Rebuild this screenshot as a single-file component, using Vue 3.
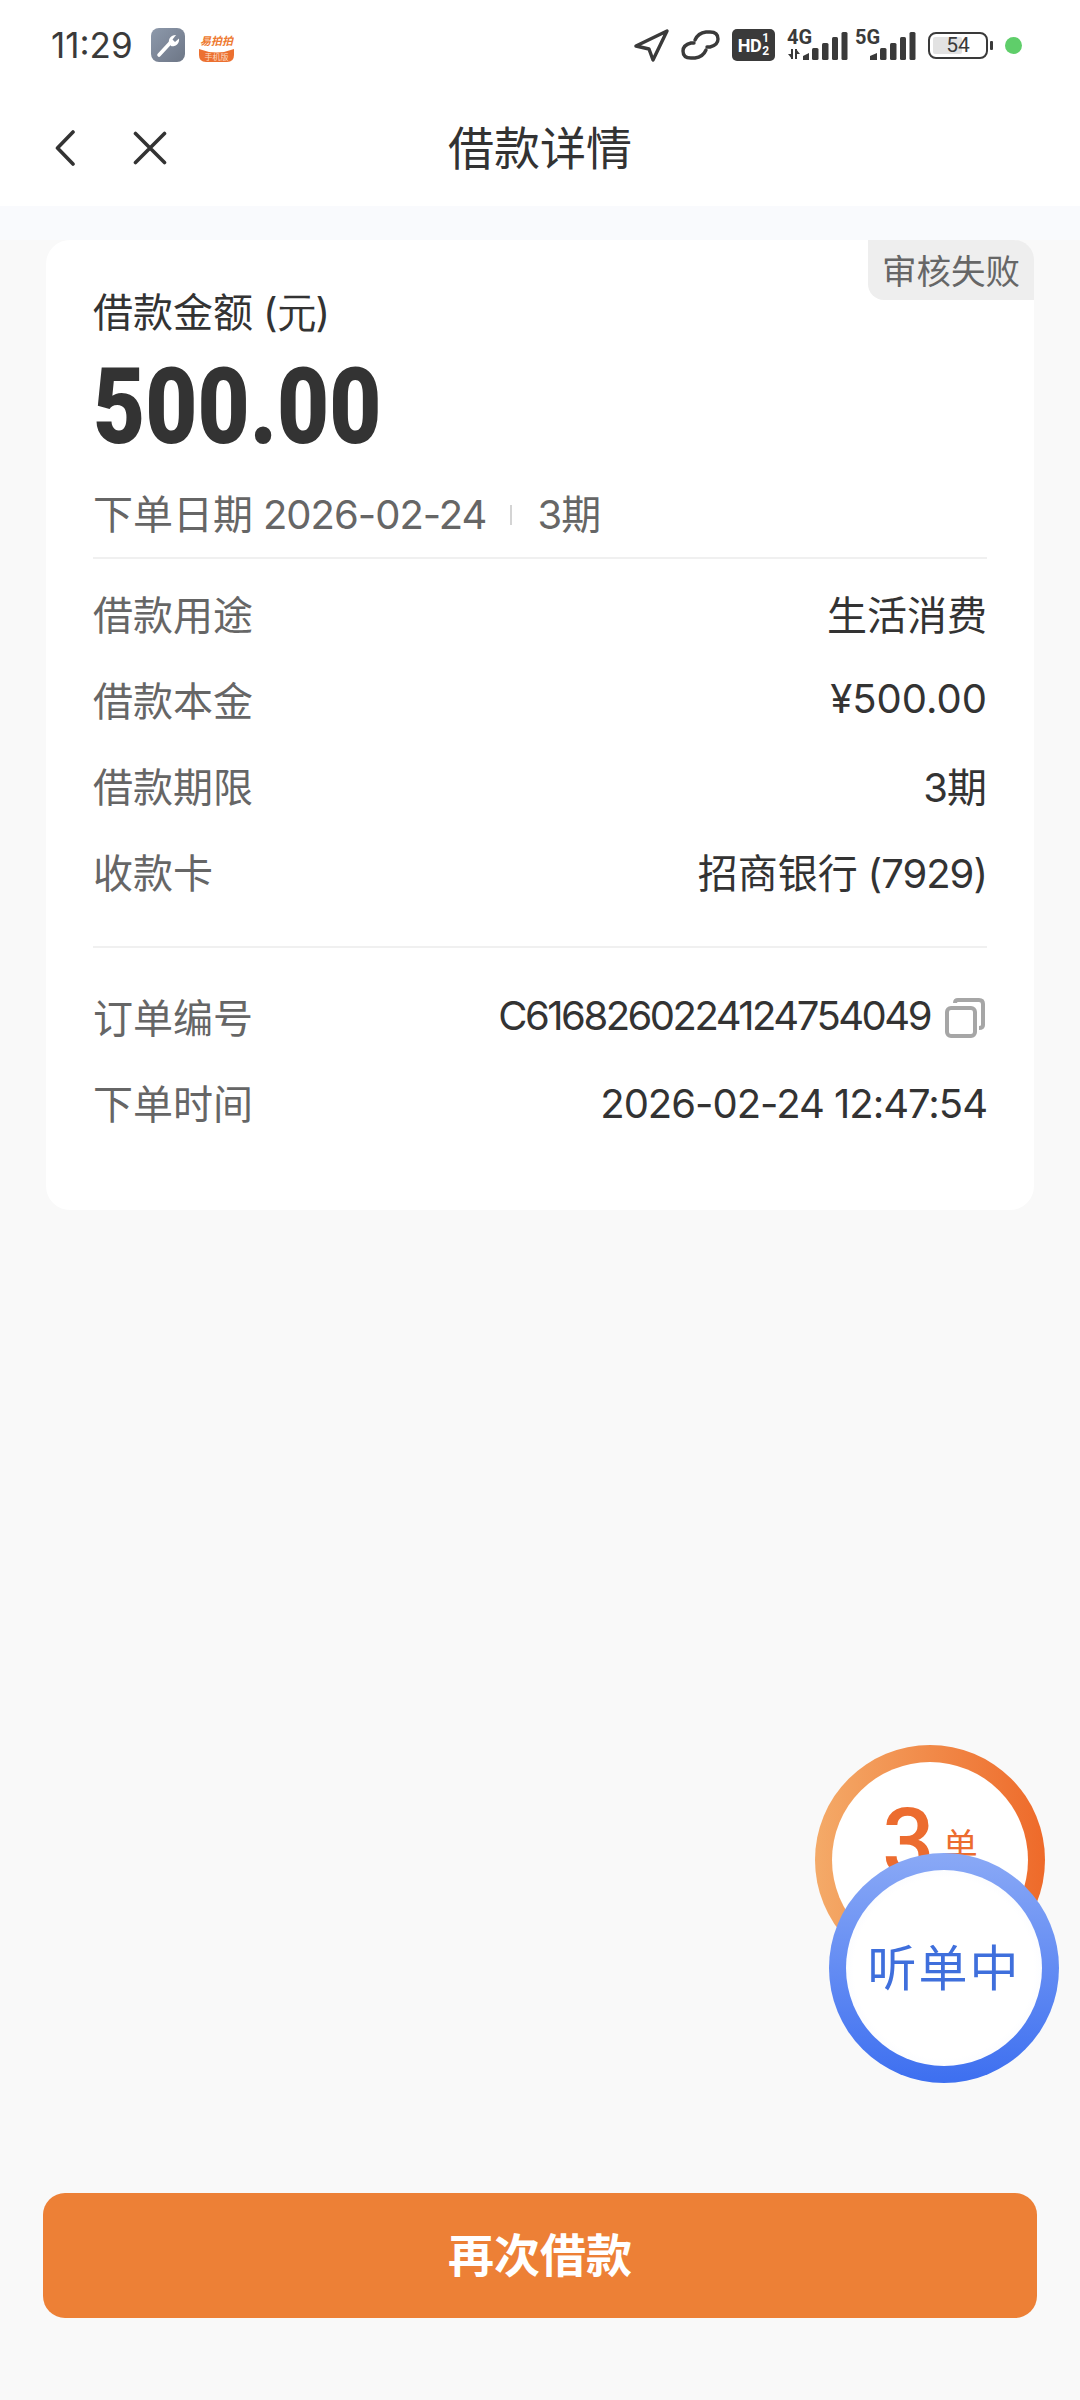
<template>
  <div class="page">
    <div class="status-bar">
      <div class="status-left">
        <span class="time">11:29</span>
        <svg class="wrench" width="34" height="34" viewBox="0 0 34 34">
          <defs>
            <linearGradient id="wrenchBg" x1="0" y1="0" x2="1" y2="1">
              <stop offset="0" stop-color="#8d99ab" />
              <stop offset="1" stop-color="#6d7686" />
            </linearGradient>
          </defs>
          <rect width="34" height="34" rx="8" fill="url(#wrenchBg)" />
          <path d="M8 27 L20 14" stroke="#fff" stroke-width="3.6" stroke-linecap="round" />
          <path d="M18 15 A6.5 6.5 0 0 1 25 7 L21.5 11.5 L24 14 L28 10.5 A6.5 6.5 0 0 1 20 18 Z" fill="#fff" />
        </svg>
        <svg class="shop" width="35" height="30" viewBox="0 0 35 30">
          <path d="M0 17 Q17.5 24 35 17 V23 Q35 30 28 30 H7 Q0 30 0 23 Z" fill="#ec7030" />
          <text x="17.5" y="13" class="shop-name">易拍拍</text>
          <text x="17.5" y="28" class="shop-sub">手机版</text>
        </svg>
      </div>
      <div class="status-right">
        <svg width="35" height="33" viewBox="0 0 35 33" fill="none">
          <path d="M2 17 L33 2 L19 31 L15 20 Z" stroke="#3a3a3a" stroke-width="3.4" stroke-linejoin="round" />
        </svg>
        <svg width="39" height="30" viewBox="0 0 39 30" fill="none" stroke="#3a3a3a" stroke-width="3.4" stroke-linecap="round">
          <path d="M14 10 Q17 3 25 2 H29 Q37 2 37 9 Q37 15 29 17 H26" />
          <path d="M25 20 Q22 27 14 28 H10 Q2 28 2 21 Q2 15 10 13 H13" />
        </svg>
        <div class="hd">
          <span class="hd-text">HD</span>
          <span class="hd-frac"><i>1</i><i>2</i></span>
        </div>
        <svg class="net" width="61" height="40" viewBox="0 -8 61 40">
          <text x="0" y="15" class="net-label">4G</text>
          <path d="M5 20 V30 M9 20 V30" stroke="#3a3a3a" stroke-width="2" fill="none" />
          <path d="M1 25 L5 30 V25 Z M9 20 L13 25 H9 Z" fill="#3a3a3a" />
          <path d="M16 31 V27 L22 24 V31 Z" fill="#3a3a3a" />
          <rect x="25" y="19" width="6.5" height="12" rx="1.5" fill="#3a3a3a" />
          <rect x="35" y="14" width="6.5" height="17" rx="1.5" fill="#3a3a3a" />
          <rect x="45" y="8" width="6" height="23" rx="1.5" fill="#3a3a3a" />
          <rect x="54.5" y="3" width="6" height="28" rx="1.5" fill="#3a3a3a" />
        </svg>
        <svg class="net net-second" width="61" height="40" viewBox="0 -8 61 40">
          <text x="0" y="15" class="net-label">5G</text>
          <path d="M15 31 V27 L22 24 V31 Z" fill="#3a3a3a" />
          <rect x="25" y="19" width="6.5" height="12" rx="1.5" fill="#3a3a3a" />
          <rect x="35" y="14" width="6.5" height="17" rx="1.5" fill="#3a3a3a" />
          <rect x="45" y="8" width="6" height="23" rx="1.5" fill="#3a3a3a" />
          <rect x="54.5" y="3" width="6" height="28" rx="1.5" fill="#3a3a3a" />
        </svg>
        <div class="battery">
          <div class="battery-body">
            <div class="battery-fill"></div>
            <span>54</span>
          </div>
          <div class="battery-cap"></div>
        </div>
        <div class="dot"></div>
      </div>
    </div>

    <div class="nav">
      <svg class="nav-back" width="20" height="36" viewBox="0 0 20 36" fill="none">
        <path d="M18 2 L2.5 18 L18 34" stroke="#333" stroke-width="3.6" stroke-linecap="round" stroke-linejoin="round" />
      </svg>
      <svg class="nav-close" width="34" height="34" viewBox="0 0 34 34" fill="none">
        <path d="M2.5 2.5 L31.5 31.5 M31.5 2.5 L2.5 31.5" stroke="#333" stroke-width="3.6" stroke-linecap="round" />
      </svg>
      <div class="nav-title">借款详情</div>
    </div>
    <div class="band"></div>

    <div class="card">
      <div class="tag">审核失败</div>
      <div class="amount-label">借款金额 <span class="num">(元)</span></div>
      <div class="amount">500.00</div>
      <div class="sub">
        <span>下单日期 <span class="num">2026-02-24</span></span>
        <i class="sep"></i>
        <span><span class="num">3</span>期</span>
      </div>
      <div class="divider first"></div>
      <div class="rows">
        <div class="row">
          <span class="row-label">借款用途</span>
          <span class="row-value">生活消费</span>
        </div>
        <div class="row">
          <span class="row-label">借款本金</span>
          <span class="row-value num price">¥500.00</span>
        </div>
        <div class="row">
          <span class="row-label">借款期限</span>
          <span class="row-value"><span class="num">3</span>期</span>
        </div>
        <div class="row">
          <span class="row-label">收款卡</span>
          <span class="row-value">招商银行 <span class="num">(7929)</span></span>
        </div>
      </div>
      <div class="divider second"></div>
      <div class="rows">
        <div class="row">
          <span class="row-label">订单编号</span>
          <span class="row-value order">
            <span class="num">C6168260224124754049</span>
            <svg width="40" height="40" viewBox="0 0 40 40" fill="none" stroke="#a6a6a6" stroke-width="4">
              <rect x="2" y="10" width="28" height="28" rx="4" />
              <path d="M10 5 Q10 2 13 2 H34 Q38 2 38 6 V27 Q38 30 34 30" />
            </svg>
          </span>
        </div>
        <div class="row">
          <span class="row-label">下单时间</span>
          <span class="row-value num order-time">2026-02-24 12:47:54</span>
        </div>
      </div>
    </div>

    <div class="float-orders">
      <div class="ring orange">
        <div class="ring-inner">
          <span class="count">3</span>
          <span class="unit">单</span>
        </div>
      </div>
      <div class="ring blue">
        <div class="ring-inner">听单中</div>
      </div>
    </div>

    <button class="action">再次借款</button>
  </div>
</template>

<script setup>
</script>

<style>
body {
  background: #f9f9f9;
}
</style>

<style scoped>
.page {
  position: relative;
  display: flex;
  flex-direction: column;
  height: 2400px;
  overflow: hidden;
  background: #f9f9f9;
  color: #333;
  font-family: Roboto, 'Noto Sans CJK SC', sans-serif;
}

.num {
  font-family: Inter, sans-serif;
  font-size: 40px;
  letter-spacing: -1px;
  line-height: 1;
}

.status-bar {
  display: flex;
  align-items: center;
  justify-content: space-between;
  height: 90px;
  padding: 0 58px 0 51px;
  background: #fff;
  box-sizing: border-box;
}

.status-left {
  display: flex;
  align-items: center;
}

.time {
  width: 100px;
  font-family: Inter, sans-serif;
  font-size: 35px;
  color: #3a3a3a;
}

.wrench {
  margin-right: 14px;
}

.shop {
  margin-top: 4px;
}

.shop-name {
  font-family: 'Noto Sans CJK SC', sans-serif;
  font-size: 11px;
  font-style: italic;
  font-weight: 700;
  fill: #ee7a30;
  text-anchor: middle;
}

.shop-sub {
  font-family: 'Noto Sans CJK SC', sans-serif;
  font-size: 8px;
  fill: #fbd9c2;
  text-anchor: middle;
}

.status-right {
  display: flex;
  align-items: center;
  gap: 12px;
}

.net {
  margin-top: -8px;
}

.net-second {
  margin-left: -5px;
}

.hd {
  display: flex;
  align-items: center;
  justify-content: center;
  gap: 1px;
  width: 43px;
  height: 32px;
  border-radius: 5px;
  background: #3a3a3a;
  color: #fff;
  font-weight: 700;
}

.hd-text {
  font-size: 18px;
  letter-spacing: -0.5px;
}

.hd-frac {
  display: flex;
  flex-direction: column;
  font-size: 12px;
  line-height: 13px;
}

.hd-frac i {
  font-style: normal;
}

.net-label {
  font-family: Roboto, sans-serif;
  font-size: 20px;
  font-weight: 700;
  fill: #3a3a3a;
}

.battery {
  display: flex;
  align-items: center;
  gap: 2px;
}

.battery-body {
  position: relative;
  display: flex;
  align-items: center;
  justify-content: center;
  width: 60px;
  height: 27px;
  border: 2.5px solid #3a3a3a;
  border-radius: 8px;
  box-sizing: border-box;
  font-size: 21px;
  color: #3a3a3a;
}

.battery-fill {
  position: absolute;
  top: 3px;
  bottom: 3px;
  left: 3px;
  width: 29px;
  border-radius: 2px;
  background: #e2e2e2;
}

.battery-body span {
  position: relative;
}

.battery-cap {
  width: 3px;
  height: 9px;
  border-radius: 1px;
  background: #3a3a3a;
}

.dot {
  width: 17px;
  height: 17px;
  border-radius: 50%;
  background: #5fce6a;
}

.nav {
  position: relative;
  display: flex;
  align-items: center;
  height: 116px;
  padding-left: 55px;
  background: #fff;
  box-sizing: border-box;
}

.nav-close {
  margin-left: 58px;
}

.nav-title {
  position: absolute;
  top: 31px;
  left: 0;
  right: 0;
  line-height: 56px;
  text-align: center;
  font-size: 46px;
}

.band {
  height: 34px;
  background: #f9fafd;
}

.card {
  position: relative;
  height: 970px;
  margin: 0 46px;
  padding: 49px 47px 0;
  border-radius: 24px;
  background: #fff;
  box-sizing: border-box;
}

.tag {
  position: absolute;
  top: 0;
  right: 0;
  width: 166px;
  height: 60px;
  border-radius: 0 20px 0 16px;
  background: #eeeeee;
  color: #666;
  font-size: 34.5px;
  line-height: 64px;
  text-align: center;
}

.amount-label {
  font-size: 40px;
  line-height: 50px;
}

.amount {
  height: 137px;
  font-size: 106px;
  font-weight: 900;
  line-height: 137px;
  transform: scaleX(0.85);
  transform-origin: left center;
}

.sub {
  display: flex;
  align-items: center;
  height: 78px;
  padding-bottom: 6px;
  box-sizing: border-box;
  color: #666;
  font-size: 40px;
}

.sep {
  width: 2px;
  height: 20px;
  margin: 6px 25px 0 24px;
  background: #d4d4d4;
}

.divider {
  height: 2px;
  background: #f0f0f0;
}

.divider.first {
  margin: 3px 0 14px;
}

.divider.second {
  margin: 29px 0 28px;
}

.row {
  display: flex;
  align-items: center;
  justify-content: space-between;
  height: 86px;
  padding-bottom: 6px;
  box-sizing: border-box;
  font-size: 40px;
}

.row-label {
  color: #666;
}

.price {
  letter-spacing: 0;
}

.order {
  display: flex;
  align-items: center;
  margin-right: 2px;
}

.order .num {
  letter-spacing: -2.5px;
}

.order svg {
  margin: 3px 0 0 15px;
}

.order-time {
  margin-top: 4px;
}

.float-orders {
  position: absolute;
  top: 1745px;
  left: 815px;
  width: 243px;
  height: 337px;
}

.ring {
  position: absolute;
  width: 230px;
  height: 230px;
  padding: 17px;
  border-radius: 50%;
  box-sizing: border-box;
}

.ring-inner {
  display: flex;
  justify-content: center;
  width: 100%;
  height: 100%;
  border-radius: 50%;
}

.orange {
  top: 0;
  left: 0;
  background: linear-gradient(90deg, #f4aa68, #ee6a2a);
}

.orange .ring-inner {
  align-items: flex-start;
  background: radial-gradient(circle, #fff 70%, #ffeede 100%);
  color: #ec6c2f;
}

.count {
  margin-top: 27px;
  font-size: 92px;
  font-weight: 500;
  line-height: 108px;
}

.unit {
  margin: 66px 0 0 8px;
  font-size: 35px;
  line-height: 40px;
}

.blue {
  top: 108px;
  left: 14px;
  background: linear-gradient(180deg, #8aa9f6, #3d6ff0);
}

.blue .ring-inner {
  align-items: center;
  padding-bottom: 8px;
  box-sizing: border-box;
  background: radial-gradient(circle, #fff 65%, #eaeffc 100%);
  color: #3f6fdc;
  font-size: 49px;
  letter-spacing: 2px;
}

.action {
  margin: auto 43px 82px;
  height: 125px;
  padding-bottom: 8px;
  border: none;
  border-radius: 22px;
  background: #ed8036;
  color: #fff;
  font-family: inherit;
  font-size: 46px;
  font-weight: 700;
}
</style>
